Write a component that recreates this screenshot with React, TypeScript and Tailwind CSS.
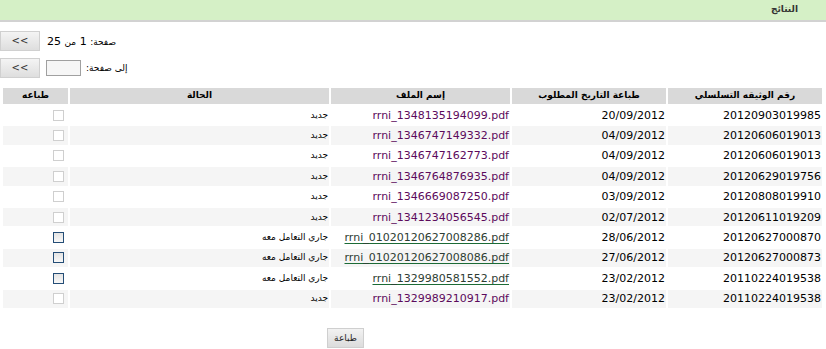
import React from 'react'

interface Row {
  serial: string
  date: string
  file: string
  status: string
  active: boolean
}

const rows: Row[] = [
  { serial: '20120903019985', date: '20/09/2012', file: 'rrni_1348135194099.pdf', status: 'جديد', active: false },
  { serial: '20120606019013', date: '04/09/2012', file: 'rrni_1346747149332.pdf', status: 'جديد', active: false },
  { serial: '20120606019013', date: '04/09/2012', file: 'rrni_1346747162773.pdf', status: 'جديد', active: false },
  { serial: '20120629019756', date: '04/09/2012', file: 'rrni_1346764876935.pdf', status: 'جديد', active: false },
  { serial: '20120808019910', date: '03/09/2012', file: 'rrni_1346669087250.pdf', status: 'جديد', active: false },
  { serial: '20120611019209', date: '02/07/2012', file: 'rrni_1341234056545.pdf', status: 'جديد', active: false },
  { serial: '20120627000870', date: '28/06/2012', file: 'rrni_01020120627008286.pdf', status: 'جاري التعامل معه', active: true },
  { serial: '20120627000873', date: '27/06/2012', file: 'rrni_01020120627008086.pdf', status: 'جاري التعامل معه', active: true },
  { serial: '20110224019538', date: '23/02/2012', file: 'rrni_1329980581552.pdf', status: 'جاري التعامل معه', active: true },
  { serial: '20110224019538', date: '23/02/2012', file: 'rrni_1329989210917.pdf', status: 'جديد', active: false },
]

const font = "font-['DejaVu_Sans',Tahoma,sans-serif]"

function NavButton() {
  return (
    <button className="w-[40px] h-[20px] border border-[#d0d0d0] bg-gradient-to-b from-[#f4f4f4] to-[#dedede] text-[10px] text-[#333] leading-none">
      &lt;&lt;
    </button>
  )
}

function Checkbox({ active }: { active: boolean }) {
  return active ? (
    <span className="inline-block w-[11px] h-[11px] border border-[#244d76] bg-gradient-to-b from-[#e4e4e4] to-[#f7f7f7] align-middle" />
  ) : (
    <span className="inline-block w-[11px] h-[11px] border border-[#cfcfcf] bg-white align-middle" />
  )
}

export default function App() {
  return (
    <div className={`w-[826px] h-[349px] overflow-hidden bg-white text-black ${font}`}>
      {/* title bar */}
      <div className="h-[22px] bg-[#d5f0c6] border-b-2 border-[#d2d2d2] flex items-center justify-end pr-[28px]">
        <span dir="rtl" className="text-[9px] font-bold text-[#333]">النتائج</span>
      </div>

      {/* paging */}
      <div className="pt-[9px] flex flex-col gap-[7px]">
        <div className="flex items-center h-[20px]">
          <NavButton />
          <span dir="rtl" className="ml-[7px] text-[11px] leading-none">
            <span className="text-[9px]">صفحة:</span> 1 <span className="text-[9px]">من</span> 25
          </span>
        </div>
        <div className="flex items-center h-[20px]">
          <NavButton />
          <input className="ml-[6px] w-[35px] h-[16px] border border-[#a0a0a0] bg-[#f6f6f6]" />
          <span dir="rtl" className="ml-[5px] text-[9px] leading-none">إلى صفحة:</span>
        </div>
      </div>

      {/* results */}
      <table dir="rtl" className="mt-[8px] ml-[1px] w-[823px] table-fixed border-separate border-spacing-[2px] text-[11px]">
        <colgroup>
          <col className="w-[154px]" />
          <col className="w-[154px]" />
          <col className="w-[179px]" />
          <col className="w-[259px]" />
          <col className="w-[65px]" />
        </colgroup>
        <thead>
          <tr className="h-[16px] text-[9px] font-bold">
            <th className="bg-[#d9d9d9] font-bold">رقم الوثيقه التسلسلي</th>
            <th className="bg-[#d9d9d9] font-bold">طباعة التاريخ المطلوب</th>
            <th className="bg-[#d9d9d9] font-bold">إسم الملف</th>
            <th className="bg-[#d9d9d9] font-bold">الحالة</th>
            <th className="bg-[#d9d9d9] font-bold">طباعه</th>
          </tr>
        </thead>
        <tbody>
          {rows.map((r, i) => {
            const bg = i % 2 === 1 ? 'bg-[#f5f5f5]' : 'bg-white'
            return (
              <tr key={i} className="h-[18.4px]">
                <td className={`${bg} leading-none`} dir="ltr">
                  <div className="text-right pr-[1px]">{r.serial}</div>
                </td>
                <td className={`${bg} leading-none`} dir="ltr">
                  <div className="text-right pr-[1px]">{r.date}</div>
                </td>
                <td className={`${bg} leading-none`} dir="ltr">
                  <div className="text-right pr-[1px]">
                    {r.active ? (
                      <span className="text-[#2e3d33] underline decoration-[#1c6b36] underline-offset-[2px]">{r.file}</span>
                    ) : (
                      <span className="text-[#5c0a5c]">{r.file}</span>
                    )}
                  </div>
                </td>
                <td className={`${bg} text-right pr-[1px] text-[9px] leading-none`}>{r.status}</td>
                <td className={`${bg} leading-none`} dir="ltr">
                  <div className="flex justify-end pr-[4px]">
                    <Checkbox active={r.active} />
                  </div>
                </td>
              </tr>
            )
          })}
        </tbody>
      </table>

      <div className="mt-[14px] ml-[327px]">
        <button className="w-[37px] h-[20px] border border-[#cfcfcf] bg-gradient-to-b from-[#f2f2f2] to-[#dcdcdc] text-[9px] text-[#222] leading-none">
          طباعة
        </button>
      </div>
    </div>
  )
}
